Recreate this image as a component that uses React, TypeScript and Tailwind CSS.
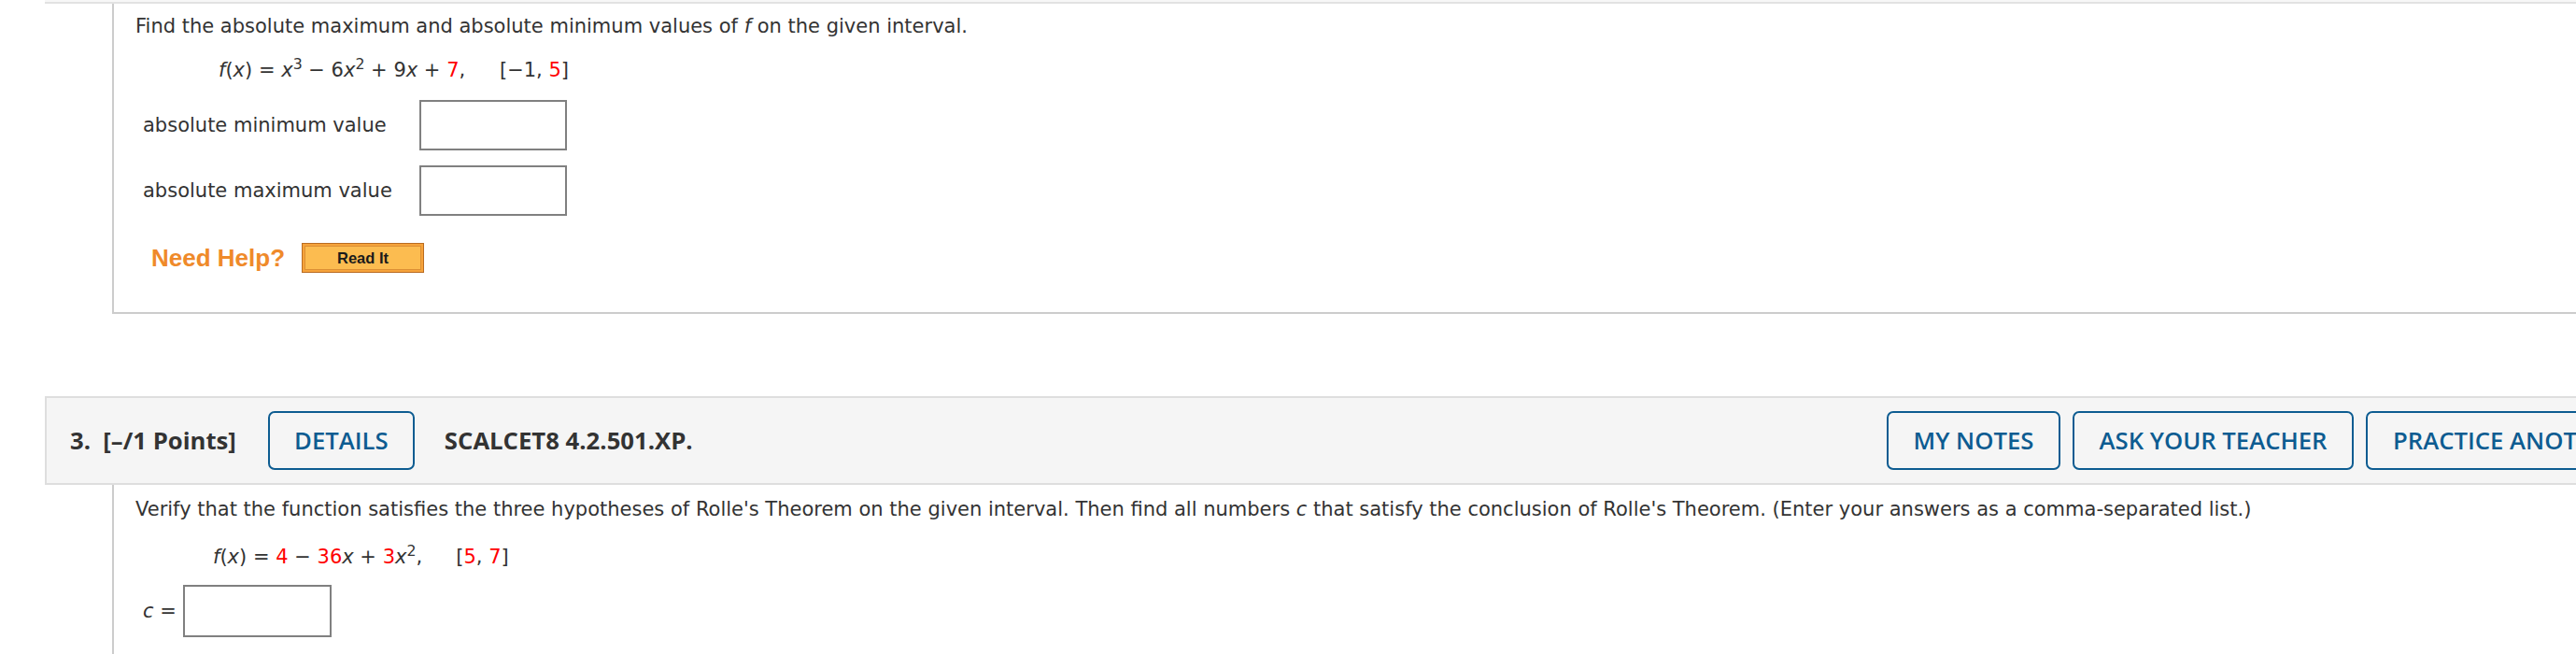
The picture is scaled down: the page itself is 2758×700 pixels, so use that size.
import React from 'react'

// Two WebAssign-style question panels, the first cut off at the top.

function AnswerBox({ className = '' }: { className?: string }) {
  return <div className={`border-2 border-[#808080] bg-white ${className}`} />
}

function HeaderButton({ label, w }: { label: string; w: string }) {
  return (
    <div
      className={`flex h-[63px] items-center justify-center rounded-[7px] border-2 border-[#0d5c91] text-[25.7px] font-semibold text-[#0d5c91] ${w}`}
    >
      {label}
    </div>
  )
}

const red = 'text-[#ff0000]'

export default function App() {
  return (
    <div className="h-[700px] w-[2758px] overflow-hidden bg-white font-['DejaVu_Sans',Verdana,sans-serif] text-[21px] leading-[24px] text-[#333]">
      <div className="ml-[48px] w-[2838px]">
        {/* bottom edge of question 2 header */}
        <div className="h-[4px] border-b-2 border-[#e2e2e2] bg-[#f7f7f7]" />

        {/* question 2 body */}
        <div className="ml-[72px] border-b-2 border-l-2 border-[#cccccc] pb-[42px] pl-[23px] pt-[12px]">
          <p>
            Find the absolute maximum and absolute minimum values of <i>f</i> on the given interval.
          </p>
          <p className="mt-[23px] pl-[89px]">
            <i>f</i>(<i>x</i>) = <i>x</i>
            <sup>3</sup> − 6<i>x</i>
            <sup>2</sup> + 9<i>x</i> + <span className={red}>7</span>,
            <span className="ml-[1.75em]">
              [−1, <span className={red}>5</span>]
            </span>
          </p>
          <div className="mt-[20px] flex h-[54px] items-center">
            <span className="w-[304px] pl-[8px]">absolute minimum value</span>
            <AnswerBox className="h-[54px] w-[158px]" />
          </div>
          <div className="mt-[16px] flex h-[54px] items-center">
            <span className="w-[304px] pl-[8px]">absolute maximum value</span>
            <AnswerBox className="h-[54px] w-[158px]" />
          </div>
          <div className="mt-[29px] flex h-[32px] items-center font-['Liberation_Sans',Arial,sans-serif]">
            <span className="pl-[17px] text-[26px] font-bold text-[#ef8a2a]">Need Help?</span>
            <div className="ml-[18px] h-[32px] w-[131px] border border-[#b96c22] bg-[#f6a33b] p-[2px]">
              <div className="flex h-full items-center justify-center border border-[#dc8f34] bg-[#fcbc50] text-[16.5px] font-bold text-[#1b1b1b]">
                Read It
              </div>
            </div>
          </div>
        </div>

        {/* question 3 header */}
        <div className="mt-[88px] flex items-center border-y-2 border-l-2 border-[#dedede] bg-[#f5f5f5] py-[14px] pl-[25px] pr-[25px] font-['Open_Sans',sans-serif]">
          <span className="text-[25.7px] font-bold text-[#333]">3.&nbsp; [–/1 Points]</span>
          <div className="ml-[34px]">
            <HeaderButton label="DETAILS" w="w-[157px]" />
          </div>
          <span className="ml-[32px] text-[25.7px] font-bold text-[#333]">SCALCET8 4.2.501.XP.</span>
          <div className="ml-auto flex gap-[13px]">
            <HeaderButton label="MY NOTES" w="w-[186px]" />
            <HeaderButton label="ASK YOUR TEACHER" w="w-[301px]" />
            <div className="flex h-[63px] w-[328px] items-center rounded-[7px] border-2 border-[#0d5c91] pl-[27px] text-[25.7px] font-semibold whitespace-nowrap text-[#0d5c91]">
              PRACTICE ANOTHER
            </div>
          </div>
        </div>

        {/* question 3 body */}
        <div className="ml-[72px] h-[200px] border-l-2 border-[#cccccc] pl-[23px] pt-[14px]">
          <p>
            Verify that the function satisfies the three hypotheses of Rolle's Theorem on the given interval. Then
            find all numbers <i>c</i> that satisfy the conclusion of Rolle's Theorem. (Enter your answers as a
            comma-separated list.)
          </p>
          <p className="mt-[27px] pl-[83px]">
            <i>f</i>(<i>x</i>) = <span className={red}>4</span> − <span className={red}>36</span>
            <i>x</i> + <span className={red}>3</span>
            <i>x</i>
            <sup>2</sup>,
            <span className="ml-[1.72em]">
              [<span className={red}>5</span>, <span className={red}>7</span>]
            </span>
          </p>
          <div className="mt-[18px] flex h-[56px] items-center">
            <span className="pl-[8px]">
              <i>c</i> =
            </span>
            <AnswerBox className="ml-[7px] h-[56px] w-[159px]" />
          </div>
        </div>
      </div>
    </div>
  )
}
